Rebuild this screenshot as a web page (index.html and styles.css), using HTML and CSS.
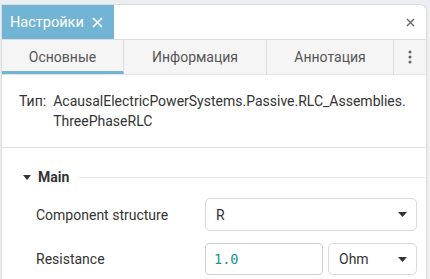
FILE: index.html
```html
<!doctype html>
<html>

<head>
    <meta charset="utf-8">
    <link rel="stylesheet" href="styles.css">
</head>

<body>

    <div class="panel">

        <div class="titleBar">
            <div class="titleTab">
                <span class="titleText">Настройки</span>
                <svg class="titleClose" width="11" height="11" viewBox="0 0 11 11">
                    <path d="M1 1 L10 10 M10 1 L1 10" stroke="#fff" stroke-width="1.7" fill="none" />
                </svg>
            </div>
            <div class="titleSpacer"></div>
            <svg class="panelClose" width="9" height="9" viewBox="0 0 9 9">
                <path d="M1 1 L8 8 M8 1 L1 8" stroke="#666" stroke-width="1.4" fill="none" />
            </svg>
        </div>

        <div class="tabRow">
            <div class="tab tabActive">Основные</div>
            <div class="tab tabInfo">Информация</div>
            <div class="tab tabNote">Аннотация</div>
            <div class="tab tabMore">
                <svg width="4" height="14" viewBox="0 0 4 14">
                    <circle cx="2" cy="2" r="1.5" fill="#666" />
                    <circle cx="2" cy="7" r="1.5" fill="#666" />
                    <circle cx="2" cy="12" r="1.5" fill="#666" />
                </svg>
            </div>
        </div>

        <div class="typeBlock">
            <span class="typeLabel">Тип:</span>
            <span class="typeValue">AcausalElectricPowerSystems.Passive.RLC_Assemblies.<wbr>ThreePhaseRLC</span>
        </div>

        <div class="section">
            <div class="sectionHeader">
                <svg class="sectionCaret" width="8" height="5" viewBox="0 0 8 5">
                    <path d="M0 0 L8 0 L4 5 Z" fill="#333" />
                </svg>
                <span class="sectionTitle">Main</span>
                <span class="sectionLine"></span>
            </div>

            <div class="paramGrid">
                <div class="paramLabel">Component structure</div>
                <div class="selectBox">
                    <span>R</span>
                    <svg width="9" height="5" viewBox="0 0 9 5"><path d="M0 0 L9 0 L4.5 5 Z" fill="#333" /></svg>
                </div>

                <div class="paramLabel">Resistance</div>
                <div class="valueRow">
                    <div class="valueBox">1.0</div>
                    <div class="selectBox unitBox">
                        <span>Ohm</span>
                        <svg width="9" height="5" viewBox="0 0 9 5"><path d="M0 0 L9 0 L4.5 5 Z" fill="#333" /></svg>
                    </div>
                </div>
            </div>
        </div>

    </div>

</body>

</html>
```

FILE: styles.css
```css
body {
    margin: 0;
    background: #eceef1;
    font-family: Roboto, "Liberation Sans", sans-serif;
    font-size: 14px;
    color: #333;
    height: 279px;
    overflow: hidden;
}

.panel {
    margin: 4px 3px 0 1px;
    height: 280px;
    background: #fff;
    border: 1px solid #d9dcdf;
    border-bottom: none;
    border-radius: 0 7px 0 0;
}

.titleBar {
    display: flex;
    align-items: center;
    height: 34px;
}

.titleTab {
    display: flex;
    align-items: center;
    height: 34px;
    width: 112px;
    box-sizing: border-box;
    padding-left: 8px;
    background: #72b4d4;
    color: #fff;
}

.titleText {
    font-size: 14.5px;
}

.titleClose {
    margin-left: 8px;
}

.titleSpacer {
    flex: 1;
}

.panelClose {
    margin-right: 11px;
}

.tabRow {
    display: flex;
    height: 36px;
    background: #f5f5f5;
    border-top: 1px solid #dcdcdc;
    border-bottom: 1px solid #e3e3e3;
    box-sizing: border-box;
}

.tab {
    display: flex;
    align-items: center;
    justify-content: center;
    border-right: 1px solid #dcdcdc;
    color: #555;
    box-sizing: border-box;
}

.tabActive {
    width: 122px;
    border-bottom: 3px solid #72b4d4;
    padding-top: 3px;
}

.tabInfo {
    width: 143px;
}

.tabNote {
    width: 127px;
}

.tabMore {
    flex: 1;
    border-right: none;
}

.typeBlock {
    display: flex;
    padding: 16px 10px 16px 17px;
    line-height: 20px;
    border-bottom: 1px solid #dfe1e4;
}

.typeLabel {
    margin-right: 7px;
}

.typeValue {
    flex: 1;
}

.section {
    padding: 19px 0 0 21px;
}

.sectionHeader {
    display: flex;
    align-items: center;
    height: 20px;
}

.sectionCaret {
    margin-right: 7px;
}

.sectionTitle {
    font-weight: bold;
    color: #333;
}

.sectionLine {
    flex: 1;
    height: 1px;
    background: #e2e4e6;
    margin-left: 10px;
    margin-right: 1px;
}

.paramGrid {
    display: grid;
    grid-template-columns: 169px 212px;
    row-gap: 12px;
    align-items: center;
    margin-top: 11px;
    padding-left: 13px;
}

.selectBox {
    display: flex;
    align-items: center;
    justify-content: space-between;
    height: 33px;
    box-sizing: border-box;
    padding: 0 9px 0 10px;
    border: 1px solid #dadada;
    border-radius: 5px;
}

.valueRow {
    display: flex;
    gap: 5px;
}

.valueBox {
    display: flex;
    align-items: center;
    width: 118px;
    height: 32px;
    box-sizing: border-box;
    padding-left: 8px;
    border: 1px solid #cfcfcf;
    border-radius: 4px;
    font-family: "DejaVu Sans Mono", monospace;
    font-size: 13.5px;
    color: #16968e;
}

.unitBox {
    flex: 1;
    height: 32px;
}
```
